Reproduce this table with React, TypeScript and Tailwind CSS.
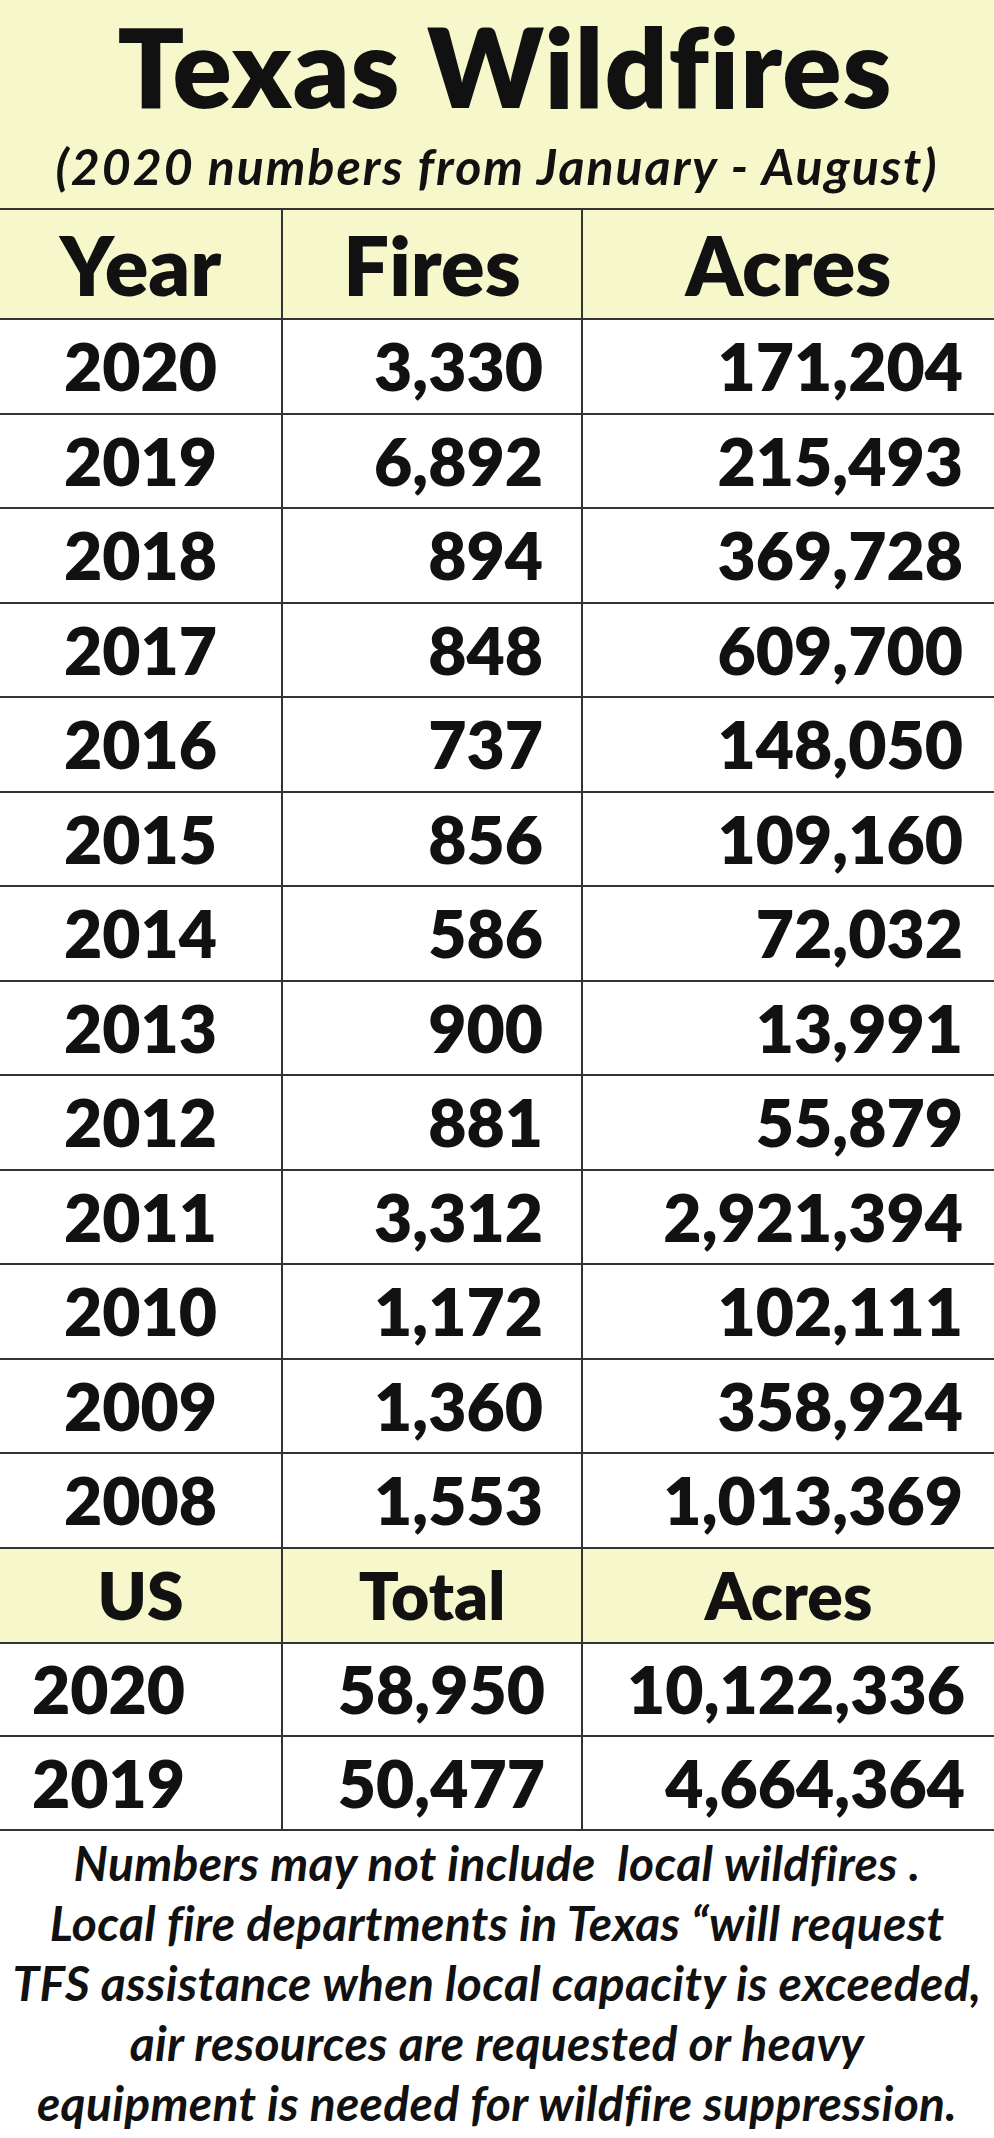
import React from "react";

const texas: [string, string, string][] = [
  ["2020", "3,330", "171,204"],
  ["2019", "6,892", "215,493"],
  ["2018", "894", "369,728"],
  ["2017", "848", "609,700"],
  ["2016", "737", "148,050"],
  ["2015", "856", "109,160"],
  ["2014", "586", "72,032"],
  ["2013", "900", "13,991"],
  ["2012", "881", "55,879"],
  ["2011", "3,312", "2,921,394"],
  ["2010", "1,172", "102,111"],
  ["2009", "1,360", "358,924"],
  ["2008", "1,553", "1,013,369"],
];

const us: [string, string, string][] = [
  ["2020", "58,950", "10,122,336"],
  ["2019", "50,477", "4,664,364"],
];

const font = { fontFamily: "Lato, 'Open Sans', sans-serif" };

export default function App() {
  return (
    <div className="w-[994px] h-[2138px] bg-white text-[#111] overflow-hidden" style={font}>
      {/* Title block */}
      <div className="h-[208px] bg-[#f6f8cb] flex flex-col items-center">
        <div className="mt-[10px] pl-[16px] text-[110px] leading-none font-extrabold tracking-[1px]">Texas Wildfires</div>
        <div className="mt-[21px] text-[50px] leading-none font-bold italic tracking-[2px]">(2020 numbers from January - August)</div>
      </div>

      {/* Header row */}
      <div className="grid grid-cols-[283px_300px_1fr] h-[112px] bg-[#f6f8cb] border-y-2 border-[#333] text-[81px] font-extrabold leading-none">
        <div className="border-r-2 border-[#333] flex items-center justify-center">Year</div>
        <div className="border-r-2 border-[#333] flex items-center justify-center">Fires</div>
        <div className="flex items-center justify-center">Acres</div>
      </div>

      {texas.map(([y, f, a]) => (
        <div key={y} className="grid grid-cols-[283px_300px_1fr] h-[94.5px] border-b-2 border-[#333] text-[66px] font-extrabold leading-none">
          <div className="border-r-2 border-[#333] flex items-center justify-center">{y}</div>
          <div className="border-r-2 border-[#333] flex items-center justify-end pr-[38px]">{f}</div>
          <div className="flex items-center justify-end pr-[31px]">{a}</div>
        </div>
      ))}

      {/* US header */}
      <div className="grid grid-cols-[283px_300px_1fr] h-[95px] bg-[#f6f8cb] border-b-2 border-[#333] text-[66px] font-extrabold leading-none">
        <div className="border-r-2 border-[#333] flex items-center justify-center">US</div>
        <div className="border-r-2 border-[#333] flex items-center justify-center">Total</div>
        <div className="flex items-center justify-center">Acres</div>
      </div>

      {us.map(([y, t, a]) => (
        <div key={y} className="grid grid-cols-[283px_300px_1fr] h-[93.5px] border-b-2 border-[#333] text-[66px] font-extrabold leading-none">
          <div className="border-r-2 border-[#333] flex items-center justify-start pl-[32px]">{y}</div>
          <div className="border-r-2 border-[#333] flex items-center justify-end pr-[36px]">{t}</div>
          <div className="flex items-center justify-end pr-[29px]">{a}</div>
        </div>
      ))}

      {/* Footer */}
      <div className="pt-[2px] flex flex-col items-center text-[48px] leading-[60px] font-bold italic tracking-[0.3px]">
        <div className="whitespace-pre">Numbers may not include  local wildfires .</div>
        <div className="whitespace-pre">Local fire departments in Texas “will request</div>
        <div className="whitespace-pre">TFS assistance when local capacity is exceeded,</div>
        <div className="whitespace-pre">air resources are requested or heavy</div>
        <div className="whitespace-pre">equipment is needed for wildfire suppression.</div>
      </div>
    </div>
  );
}
